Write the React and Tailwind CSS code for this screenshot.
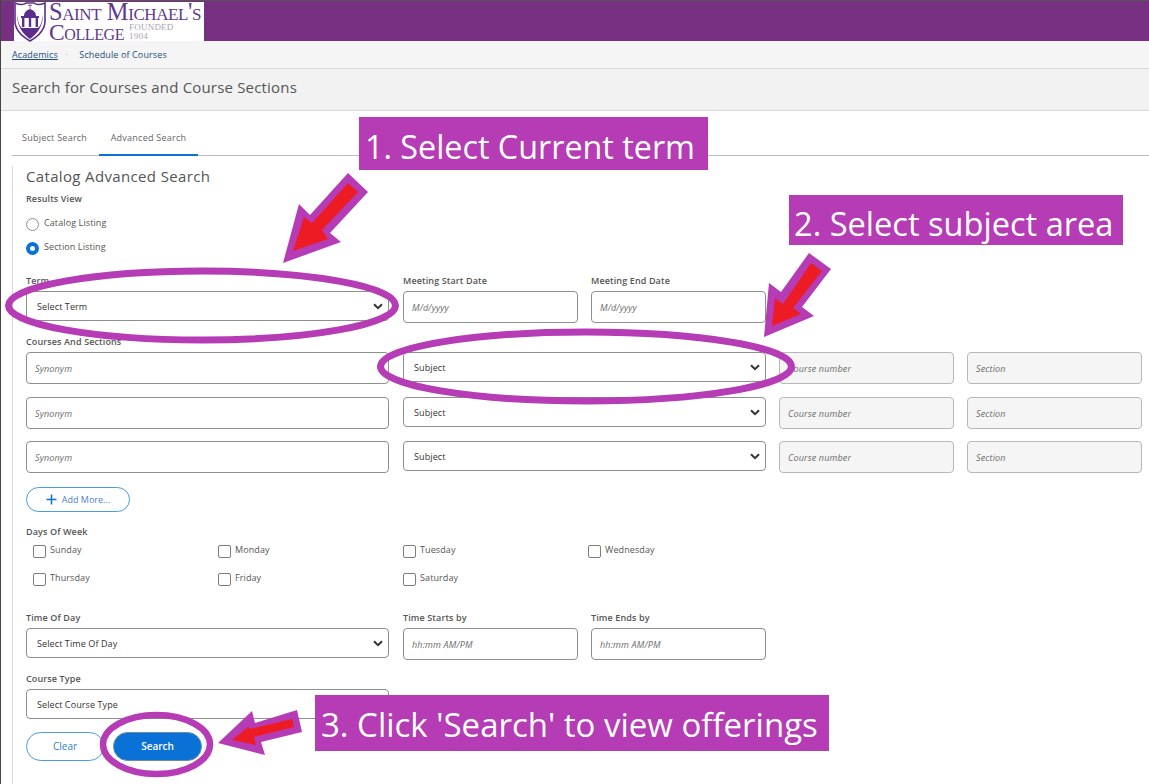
import React from "react";

const OS = "font-['Open_Sans','Noto_Sans',sans-serif]";

function Label({ children, className = "" }) {
  return <div className={`text-[9px] leading-[12px] font-semibold tracking-[0.12px] text-[#555] ${className}`}>{children}</div>;
}

function Chevron() {
  return (
    <svg width="10" height="7" viewBox="0 0 10 7" fill="none" className="shrink-0">
      <path d="M1 1.2 L5 5.2 L9 1.2" stroke="#333" strokeWidth="2" />
    </svg>
  );
}

function SelectBox({ text, h = "h-[30px]", chevron = true }) {
  return (
    <div className={`${h} w-full flex items-center justify-between pl-[10px] pr-[5px] bg-white border border-[#8f8f8f] rounded-[4px] text-[9px] tracking-[0.1px] text-[#333]`}>
      <span className="pt-[1px]">{text}</span>
      {chevron && <Chevron />}
    </div>
  );
}

function TextInput({ placeholder, disabled, h = "h-[32px]", className = "" }) {
  return (
    <input
      readOnly
      placeholder={placeholder}
      className={`${h} w-full px-[8px] border rounded-[4px] text-[9px] tracking-[0.15px] italic outline-none placeholder:text-[#6b6b6b] ${
        disabled ? "bg-[#f5f5f5] border-[#b8b8b8]" : "bg-white border-[#8f8f8f]"
      } ${className}`}
    />
  );
}

function Radio({ checked, label }) {
  return (
    <div className="flex items-center h-[14px] gap-[5px]">
      {checked ? (
        <span className="w-[13px] h-[13px] rounded-full bg-[#0a72d6] flex items-center justify-center">
          <span className="w-[5px] h-[5px] rounded-full bg-white" />
        </span>
      ) : (
        <span className="w-[13px] h-[13px] rounded-full bg-white border border-[#8f8f8f]" />
      )}
      <span className="text-[9px] leading-[10px] tracking-[0.1px] text-[#555] -mt-[2px]">{label}</span>
    </div>
  );
}

function Check({ label }) {
  return (
    <div className="flex items-center gap-[4px] h-[14px]">
      <span className="w-[13px] h-[13px] mt-[1px] rounded-[2px] bg-white border border-[#7d7d7d]" />
      <span className="text-[9px] leading-[10px] tracking-[0.1px] text-[#555] -mt-[2px]">{label}</span>
    </div>
  );
}

function CourseRow({ mt }) {
  return (
    <div className={`grid grid-cols-[364px_175px_175px_175px_175px] gap-x-[13px] ${mt}`}>
      <div className="w-[363px]"><TextInput placeholder="Synonym" /></div>
      <div className="col-span-2"><SelectBox text="Subject" /></div>
      <TextInput placeholder="Course number" disabled />
      <TextInput placeholder="Section" disabled />
    </div>
  );
}

function Logo() {
  return (
    <div className="w-[190px] h-[40px] bg-white flex text-[#5e3a8e] font-['Liberation_Serif',serif]">
      <svg width="32" height="40" viewBox="0 0 32 40" className="shrink-0">
        <path d="M1 1 C6 3 10 3 12 1 H20 C22 3 26 3 31 1 V19 C31 29 23 35 16 39 C9 35 1 29 1 19 Z" fill="#fff" stroke="#5c2d8c" strokeWidth="1.6" />
        <path d="M3 12 C3 25 9 32 16 37 C23 32 29 25 29 12 C28 19 27 24 24 26 H8 C5 24 4 19 3 12 Z" fill="#5c2d8c" />
        <path d="M10 14 C10 10 13 8 16 7 C19 8 22 10 22 14 Z" fill="#5c2d8c" />
        <rect x="7" y="14" width="18" height="2" fill="#5c2d8c" />
        <rect x="8" y="16" width="2.4" height="9" fill="#5c2d8c" />
        <rect x="14.8" y="16" width="2.4" height="9" fill="#5c2d8c" />
        <rect x="21.6" y="16" width="2.4" height="9" fill="#5c2d8c" />
        <path d="M16 1 V7 M14 3.5 H18" stroke="#8a7a9c" strokeWidth="1" />
      </svg>
      <div className="ml-[3px] min-w-0">
        <div className="text-[24.4px] leading-[20px] whitespace-nowrap tracking-[-0.4px]" style={{ fontVariant: "small-caps" }}>Saint Michael's</div>
        <div className="flex items-center">
          <span className="text-[23.5px] leading-[20px] tracking-[-0.4px]" style={{ fontVariant: "small-caps" }}>College</span>
          <div className="ml-[5px] text-[9px] leading-[9px] text-[#a9a4ad] tracking-[0.2px]">
            <div>FOUNDED</div>
            <div>1904</div>
          </div>
        </div>
      </div>
    </div>
  );
}

function Annotations() {
  const purple = "#b53cb5";
  const red = "#ed1c24";
  const Arrow = ({ outer, inner }) => (
    <>
      <polygon points={outer} fill={purple} />
      <polygon points={inner} fill={red} />
    </>
  );
  return (
    <svg width="1149" height="784" className="absolute left-0 top-0 pointer-events-none">
      <ellipse cx="202" cy="305.5" rx="193.5" ry="34.5" fill="none" stroke={purple} strokeWidth="7" />
      <ellipse cx="586" cy="366.5" rx="205.5" ry="34.5" fill="none" stroke={purple} strokeWidth="7" />
      <ellipse cx="156.5" cy="744.5" rx="53.5" ry="29.5" fill="none" stroke={purple} strokeWidth="6.5" />
      <Arrow outer="348,173 368,192 330,233 341,242 283,263 299,204 310,215" inner="348,183 358,192 322,230 328,239 293,251 304,217 312,223" />
      <Arrow outer="809,253 831,269 802,307 814,316 764,337 769,283 781,292" inner="811,263 822,271 793,308 801,314 772,326 775,298 783,304" />
      <Arrow outer="297,710 302,732 261,742 265,755 218,743 252,711 255,723" inner="292,719 294,727 254,737 256,745 232,740 248,727 250,729" />
    </svg>
  );
}

function Callout({ className, children }) {
  return (
    <div className={`absolute bg-[#b53cb5] text-white leading-none flex items-center whitespace-nowrap ${className}`}>
      {children}
    </div>
  );
}

export default function App() {
  return (
    <div className={`relative w-[1149px] h-[784px] overflow-hidden bg-white ${OS}`}>
      <div className="absolute left-0 top-0 bottom-0 w-px bg-[#444]" />
      <div className="h-[41px] bg-[#772f82] pl-[14px] pt-px border-t border-[#555]">
        <Logo />
      </div>
      <div className="h-[28px] bg-[#f5f5f5] border-b border-[#d9d9d9] pl-[12px] flex items-center gap-[8px] text-[9px] tracking-[0.12px] text-[#1c4f7c]">
        <span className="underline">Academics</span>
        <span className="text-[#aaa]">·</span>
        <span className="ml-[3px]">Schedule of Courses</span>
      </div>
      <div className="h-[42px] bg-[#f2f2f2] border-b border-[#d9d9d9] pl-[12px] flex items-center text-[15px] tracking-[0.18px] text-[#555] pb-[4px]">
        Search for Courses and Course Sections
      </div>
      <div className="ml-[12px] h-[45px] border-b border-[#bdbdbd] flex items-end text-[9px] tracking-[0.25px] text-[#666]">
        <div className="w-[87px] h-[30px] pl-[10px] pt-[6px]">Subject Search</div>
        <div className="w-[99px] h-[31px] pt-[6px] text-center border-b-2 border-[#0a72d6] -mb-px">Advanced Search</div>
      </div>
      <div className="ml-[12px] border-l border-[#d9d9d9] pl-[13px] h-[629px]">
        <div className="text-[15px] leading-[20px] tracking-[0.35px] text-[#555] mt-[10px]">Catalog Advanced Search</div>
        <Label className="mt-[7px]">Results View</Label>
        <div className="mt-[12px]"><Radio label="Catalog Listing" /></div>
        <div className="mt-[10px]"><Radio checked label="Section Listing" /></div>

        <div className="grid grid-cols-[364px_175px_175px] gap-x-[13px] mt-[20px]">
          <div>
            <Label>Term</Label>
            <div className="w-[363px] mt-[4px]"><SelectBox text="Select Term" /></div>
          </div>
          <div>
            <Label>Meeting Start Date</Label>
            <div className="mt-[4px]"><TextInput placeholder="M/d/yyyy" /></div>
          </div>
          <div>
            <Label>Meeting End Date</Label>
            <div className="mt-[4px]"><TextInput placeholder="M/d/yyyy" /></div>
          </div>
        </div>

        <Label className="mt-[13px]">Courses And Sections</Label>
        <CourseRow mt="mt-[4px]" />
        <CourseRow mt="mt-[13px]" />
        <CourseRow mt="mt-[12px]" />

        <div className="mt-[14px] w-[104px] h-[25px] rounded-full border border-[#4a9be4] flex items-center justify-center gap-[5px] text-[9px] text-[#4f7fd0]">
          <svg width="11" height="11" viewBox="0 0 11 11"><path d="M5.5 0.5 V10.5 M0.5 5.5 H10.5" stroke="#0a72d6" strokeWidth="1.5" /></svg>
          <span>Add More...</span>
        </div>

        <Label className="mt-[14px]">Days Of Week</Label>
        <div className="ml-[7px] mt-[6px] grid grid-cols-[185px_185px_185px_185px] gap-y-[14px]">
          <Check label="Sunday" />
          <Check label="Monday" />
          <Check label="Tuesday" />
          <Check label="Wednesday" />
          <Check label="Thursday" />
          <Check label="Friday" />
          <Check label="Saturday" />
        </div>

        <div className="grid grid-cols-[364px_175px_175px] gap-x-[13px] mt-[26px]">
          <div>
            <Label>Time Of Day</Label>
            <div className="w-[363px] mt-[4px]"><SelectBox text="Select Time Of Day" /></div>
          </div>
          <div>
            <Label>Time Starts by</Label>
            <div className="mt-[4px]"><TextInput placeholder="hh:mm AM/PM" h="h-[32px]" /></div>
          </div>
          <div>
            <Label>Time Ends by</Label>
            <div className="mt-[4px]"><TextInput placeholder="hh:mm AM/PM" h="h-[32px]" /></div>
          </div>
        </div>

        <Label className="mt-[13px]">Course Type</Label>
        <div className="w-[363px] mt-[4px]"><SelectBox text="Select Course Type" chevron={false} /></div>

        <div className="flex gap-[9px] mt-[13px]">
          <div className="w-[78px] h-[29px] rounded-full border border-[#4a9be4] flex items-center justify-center text-[10px] text-[#2f7fc8]">Clear</div>
          <div className="w-[89px] h-[29px] rounded-full bg-[#0a72d6] border border-[#6e8aa5] flex items-center justify-center text-[10px] font-semibold text-white">Search</div>
        </div>
      </div>

      <Annotations />
      <Callout className="left-[359px] top-[117px] w-[349px] h-[53px] pl-[6px] pt-[6px] text-[32.3px]">1. Select Current term</Callout>
      <Callout className="left-[789px] top-[195px] w-[334px] h-[50px] pl-[5px] pt-[8px] text-[32.6px]">2. Select subject area</Callout>
      <Callout className="left-[315px] top-[695px] w-[514px] h-[56px] pl-[6px] pt-[2px] text-[33px]">3. Click 'Search' to view offerings</Callout>
    </div>
  );
}
